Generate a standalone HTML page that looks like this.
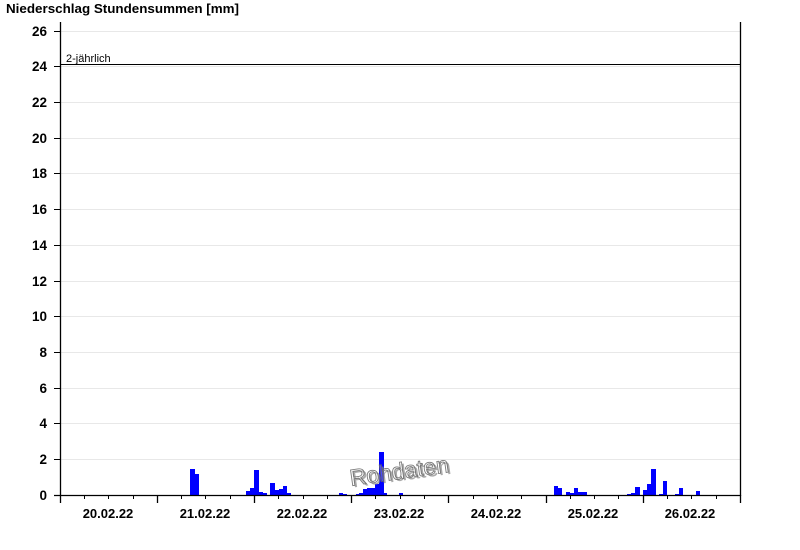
<!DOCTYPE html>
<html><head><meta charset="utf-8"><style>
html,body{margin:0;padding:0;background:#fff;}
svg{display:block;font-family:"Liberation Sans",Arial,sans-serif;}
</style></head><body>
<svg width="800" height="550" viewBox="0 0 800 550" xmlns="http://www.w3.org/2000/svg">
<text x="6" y="13" font-size="12.5" font-weight="bold" fill="#000" textLength="233" lengthAdjust="spacingAndGlyphs">Niederschlag Stundensummen [mm]</text>
<g stroke="#e8e8e8" stroke-width="1">
<line x1="60" x2="740" y1="459.5" y2="459.5"/><line x1="60" x2="740" y1="423.5" y2="423.5"/>
<line x1="60" x2="740" y1="388.5" y2="388.5"/><line x1="60" x2="740" y1="352.5" y2="352.5"/>
<line x1="60" x2="740" y1="316.5" y2="316.5"/><line x1="60" x2="740" y1="281.5" y2="281.5"/>
<line x1="60" x2="740" y1="245.5" y2="245.5"/><line x1="60" x2="740" y1="209.5" y2="209.5"/>
<line x1="60" x2="740" y1="173.5" y2="173.5"/><line x1="60" x2="740" y1="138.5" y2="138.5"/>
<line x1="60" x2="740" y1="102.5" y2="102.5"/><line x1="60" x2="740" y1="66.5" y2="66.5"/>
<line x1="60" x2="740" y1="31.5" y2="31.5"/>
</g>
<g fill="#0000ff">
<rect x="190" y="469" width="5" height="26"/><rect x="195" y="474" width="4" height="21"/>
<rect x="246" y="491" width="4" height="4"/><rect x="250" y="488" width="4" height="7"/>
<rect x="254" y="470" width="5" height="25"/><rect x="259" y="492" width="4" height="3"/>
<rect x="263" y="493" width="4" height="2"/><rect x="270" y="483" width="5" height="12"/>
<rect x="275" y="490" width="4" height="5"/><rect x="279" y="489" width="4" height="6"/>
<rect x="283" y="486" width="4" height="9"/><rect x="287" y="493" width="4" height="2"/>
<rect x="339" y="493" width="4" height="2"/><rect x="343" y="494" width="4" height="1"/>
<rect x="356" y="494" width="3" height="1"/><rect x="359" y="493" width="4" height="2"/>
<rect x="363" y="489" width="4" height="6"/><rect x="367" y="488" width="4" height="7"/>
<rect x="371" y="488" width="4" height="7"/><rect x="375" y="484" width="4" height="11"/>
<rect x="379" y="452" width="5" height="43"/><rect x="384" y="493" width="3" height="2"/>
<rect x="399" y="493" width="4" height="2"/>
<rect x="554" y="486" width="4" height="9"/><rect x="558" y="488" width="4" height="7"/>
<rect x="566" y="492" width="4" height="3"/><rect x="570" y="493" width="4" height="2"/>
<rect x="574" y="488" width="4" height="7"/><rect x="578" y="492" width="9" height="3"/>
<rect x="627" y="494" width="4" height="1"/><rect x="631" y="493" width="4" height="2"/>
<rect x="635" y="487" width="5" height="8"/><rect x="643" y="490" width="4" height="5"/>
<rect x="647" y="484" width="4" height="11"/><rect x="651" y="469" width="5" height="26"/>
<rect x="659" y="494" width="4" height="1"/><rect x="663" y="481" width="4" height="14"/>
<rect x="675" y="494" width="4" height="1"/><rect x="679" y="488" width="4" height="7"/>
<rect x="696" y="491" width="4" height="4"/>
</g>
<line x1="60" x2="740" y1="64.5" y2="64.5" stroke="#000" stroke-width="1"/>
<text x="66" y="62" font-size="11" fill="#000">2-jährlich</text>
<g stroke="#000" stroke-width="1.3" fill="none">
<line x1="60.5" y1="22" x2="60.5" y2="496"/>
<line x1="740.5" y1="22" x2="740.5" y2="496"/>
<line x1="54" y1="495.5" x2="741" y2="495.5"/>
</g>
<g stroke="#000" stroke-width="1">
<line x1="54" x2="60" y1="459.5" y2="459.5"/><line x1="54" x2="60" y1="423.5" y2="423.5"/>
<line x1="54" x2="60" y1="388.5" y2="388.5"/><line x1="54" x2="60" y1="352.5" y2="352.5"/>
<line x1="54" x2="60" y1="316.5" y2="316.5"/><line x1="54" x2="60" y1="281.5" y2="281.5"/>
<line x1="54" x2="60" y1="245.5" y2="245.5"/><line x1="54" x2="60" y1="209.5" y2="209.5"/>
<line x1="54" x2="60" y1="173.5" y2="173.5"/><line x1="54" x2="60" y1="138.5" y2="138.5"/>
<line x1="54" x2="60" y1="102.5" y2="102.5"/><line x1="54" x2="60" y1="66.5" y2="66.5"/>
<line x1="54" x2="60" y1="31.5" y2="31.5"/>
</g>
<g stroke="#000" stroke-width="1.3">
<line x1="60.5" x2="60.5" y1="495" y2="503"/><line x1="157.5" x2="157.5" y1="495" y2="503"/>
<line x1="254.5" x2="254.5" y1="495" y2="503"/><line x1="351.5" x2="351.5" y1="495" y2="503"/>
<line x1="448.5" x2="448.5" y1="495" y2="503"/><line x1="546.5" x2="546.5" y1="495" y2="503"/>
<line x1="643.5" x2="643.5" y1="495" y2="503"/><line x1="740.5" x2="740.5" y1="495" y2="503"/>
</g>
<g stroke="#000" stroke-width="1">
<line x1="84.5" x2="84.5" y1="495" y2="499"/><line x1="108.5" x2="108.5" y1="495" y2="499"/><line x1="133.5" x2="133.5" y1="495" y2="499"/>
<line x1="181.5" x2="181.5" y1="495" y2="499"/><line x1="205.5" x2="205.5" y1="495" y2="499"/><line x1="230.5" x2="230.5" y1="495" y2="499"/>
<line x1="278.5" x2="278.5" y1="495" y2="499"/><line x1="303.5" x2="303.5" y1="495" y2="499"/><line x1="327.5" x2="327.5" y1="495" y2="499"/>
<line x1="375.5" x2="375.5" y1="495" y2="499"/><line x1="400.5" x2="400.5" y1="495" y2="499"/><line x1="424.5" x2="424.5" y1="495" y2="499"/>
<line x1="473.5" x2="473.5" y1="495" y2="499"/><line x1="497.5" x2="497.5" y1="495" y2="499"/><line x1="521.5" x2="521.5" y1="495" y2="499"/>
<line x1="570.5" x2="570.5" y1="495" y2="499"/><line x1="594.5" x2="594.5" y1="495" y2="499"/><line x1="618.5" x2="618.5" y1="495" y2="499"/>
<line x1="667.5" x2="667.5" y1="495" y2="499"/><line x1="691.5" x2="691.5" y1="495" y2="499"/><line x1="716.5" x2="716.5" y1="495" y2="499"/>
</g>
<g font-size="13.5" font-weight="bold" fill="#000" text-anchor="end">
<text x="47" y="500">0</text><text x="47" y="464">2</text><text x="47" y="428">4</text>
<text x="47" y="393">6</text><text x="47" y="357">8</text><text x="47" y="321">10</text>
<text x="47" y="286">12</text><text x="47" y="250">14</text><text x="47" y="214">16</text>
<text x="47" y="178">18</text><text x="47" y="143">20</text><text x="47" y="107">22</text>
<text x="47" y="71">24</text><text x="47" y="36">26</text>
</g>
<g font-size="13" font-weight="bold" fill="#000" text-anchor="middle">
<text x="108" y="518">20.02.22</text><text x="205" y="518">21.02.22</text>
<text x="302" y="518">22.02.22</text><text x="399" y="518">23.02.22</text>
<text x="496" y="518">24.02.22</text><text x="593" y="518">25.02.22</text>
<text x="690" y="518">26.02.22</text>
</g>
<g transform="rotate(-8 399 470)" font-size="23" text-anchor="middle">
<text x="401" y="481" fill="#888" opacity="0.7">Rohdaten</text>
<text x="399" y="479" fill="#fff" fill-opacity="0.35" stroke="#666" stroke-width="0.9" opacity="0.85">Rohdaten</text>
</g>
</svg>
</body></html>
